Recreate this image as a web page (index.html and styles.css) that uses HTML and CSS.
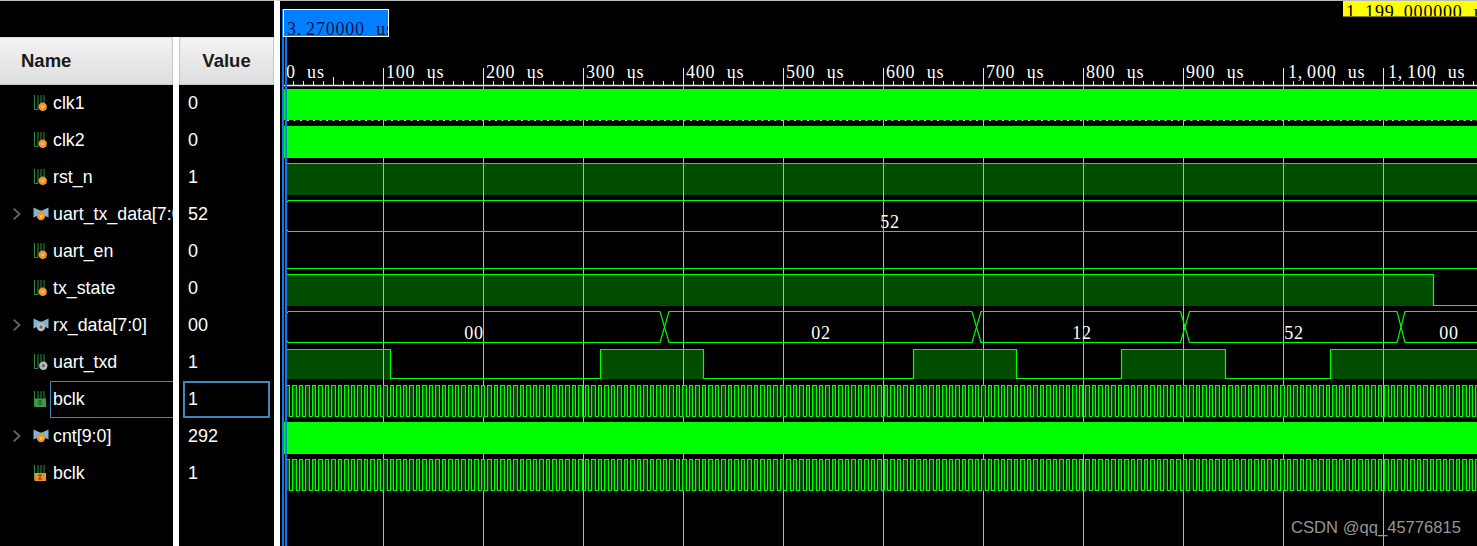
FILE: index.html
```html
<!DOCTYPE html>
<html lang="en">
<head>
    <meta charset="UTF-8">
    <meta name="viewport" content="width=device-width, initial-scale=1.0">
    <title>Waveform Viewer</title>
    <link rel="stylesheet" href="styles.css">
</head>
<body>

<svg class="icon-defs" width="0" height="0">
    <defs>
        <g id="wire">
            <path d="M1.5 0v14.500h3.500V0M8 0v8M11 0v8M11 14.500h2.500" fill="none" stroke="#2a8f42" stroke-width="1"/>
        </g>
        <g id="bowtie">
            <path d="M.5 1.500l6.500 3h2l6.500-3v10l-4.500-2h-6l-4.500 2z" fill="#80b4d2"/>
        </g>
        <g id="orange-dot">
            <circle r="4.200" fill="#f0942c"/>
            <path d="M-1.400-1.300l1.400 2.800 1.400-2.800" fill="none" stroke="#ffe9a8" stroke-width=".8"/>
        </g>
        <g id="gray-dot">
            <circle r="4.200" fill="#b9b9b9"/>
            <circle r="1.600" fill="#666"/>
        </g>
    </defs>
</svg>

<div class="viewer">
    <div class="panels">
        <div class="panels-top"></div>
        <div class="columns">
            <div class="col col-name">
                <div class="col-head">Name</div>
                <div class="row"><svg class="sig" viewBox="0 0 17 17"><use href="#wire"/><use href="#orange-dot" x="9.700" y="11.700"/></svg><span>clk1</span></div>
                <div class="row"><svg class="sig" viewBox="0 0 17 17"><use href="#wire"/><use href="#orange-dot" x="9.700" y="11.700"/></svg><span>clk2</span></div>
                <div class="row"><svg class="sig" viewBox="0 0 17 17"><use href="#wire"/><use href="#orange-dot" x="9.700" y="11.700"/></svg><span>rst_n</span></div>
                <div class="row"><svg class="chev" viewBox="0 0 8 12"><path d="M.7 .7l5.800 5.300-5.800 5.300"/></svg><svg class="sig" viewBox="0 0 17 17"><use href="#bowtie"/><use href="#orange-dot" x="8" y="10"/></svg><span>uart_tx_data[7:0]</span></div>
                <div class="row"><svg class="sig" viewBox="0 0 17 17"><use href="#wire"/><use href="#orange-dot" x="9.700" y="11.700"/></svg><span>uart_en</span></div>
                <div class="row"><svg class="sig" viewBox="0 0 17 17"><use href="#wire"/><use href="#orange-dot" x="9.700" y="11.700"/></svg><span>tx_state</span></div>
                <div class="row"><svg class="chev" viewBox="0 0 8 12"><path d="M.7 .7l5.800 5.300-5.800 5.300"/></svg><svg class="sig" viewBox="0 0 17 17"><use href="#bowtie"/><use href="#gray-dot" x="8" y="10"/></svg><span>rx_data[7:0]</span></div>
                <div class="row"><svg class="sig" viewBox="0 0 17 17"><use href="#wire"/><use href="#gray-dot" x="10.300" y="11.700"/></svg><span>uart_txd</span></div>
                <div class="row row-selected"><svg class="sig" viewBox="0 0 17 17"><use href="#wire"/><rect x="1.500" y="7.500" width="11.500" height="8.500" fill="#3f9a48"/><path d="M6 9.500h2v4h-2z" fill="none" stroke="#1c5a24"/></svg><span>bclk</span></div>
                <div class="row"><svg class="chev" viewBox="0 0 8 12"><path d="M.7 .7l5.800 5.300-5.800 5.300"/></svg><svg class="sig" viewBox="0 0 17 17"><use href="#bowtie"/><use href="#orange-dot" x="8" y="10"/></svg><span>cnt[9:0]</span></div>
                <div class="row"><svg class="sig" viewBox="0 0 17 17"><use href="#wire"/><rect x="1.500" y="8" width="11.500" height="8" fill="#f0902a"/><path d="M5 10h4M7 10v4M5 14h4" fill="none" stroke="#6b3a08"/></svg><span>bclk</span></div>
            </div>
            <div class="col col-value">
                <div class="col-head">Value</div>
                <div class="val">0</div>
                <div class="val">0</div>
                <div class="val">1</div>
                <div class="val">52</div>
                <div class="val">0</div>
                <div class="val">0</div>
                <div class="val">00</div>
                <div class="val">1</div>
                <div class="val val-selected">1</div>
                <div class="val">292</div>
                <div class="val">1</div>
            </div>
        </div>
    </div>

    <div class="wave-pane">
        <svg class="wave" viewBox="280 0 1197 546" width="1197" height="546">
            <defs>
                <!-- one 13px tile is two periods of the 6.5px clock -->
                <path id="clk-tile" d="M0 31V0h3v31h3V0h4v31h3"/>
                <g id="clk-130">
                    <use href="#clk-tile" x="0"/><use href="#clk-tile" x="13"/><use href="#clk-tile" x="26"/><use href="#clk-tile" x="39"/><use href="#clk-tile" x="52"/>
                    <use href="#clk-tile" x="65"/><use href="#clk-tile" x="78"/><use href="#clk-tile" x="91"/><use href="#clk-tile" x="104"/><use href="#clk-tile" x="117"/>
                </g>
                <g id="clk-wave">
                    <use href="#clk-130" x="0"/><use href="#clk-130" x="130"/><use href="#clk-130" x="260"/><use href="#clk-130" x="390"/><use href="#clk-130" x="520"/>
                    <use href="#clk-130" x="650"/><use href="#clk-130" x="780"/><use href="#clk-130" x="910"/><use href="#clk-130" x="1040"/><use href="#clk-130" x="1170"/>
                </g>
                <clipPath id="cursor-clip"><rect x="284" y="10" width="104" height="26"/></clipPath>
                <clipPath id="time-clip"><rect x="1343" y="1" width="134" height="15"/></clipPath>
            </defs>

            <!-- dark traces sit under the grid -->
            <g class="dark">
                <rect x="286" y="163" width="1191" height="32"/>
                <rect x="286" y="274" width="1147" height="32"/>
                <path d="M286 379V349H390V379H600V349H703V379H913V349H1016V379H1121V349H1225V379H1330V349H1477V379H286z"/>
            </g>

            <g class="grid">
                <path d="M383.500 85V546M483.500 85V546M583.500 85V546M683.500 85V546M783.500 85V546M883.500 85V546M983.500 85V546M1083.500 85V546M1183.500 85V546M1283.500 85V546M1383.500 85V546"/>
            </g>

            <use class="clk" href="#clk-wave" x="286.500" y="385.500"/>
            <use class="clk" href="#clk-wave" x="286.500" y="459.500"/>

            <g class="trace">
                <path d="M287 163.500H1477"/>
                <path d="M288 200.500H1477M288 231.500H1477M288 200.500L286.500 203V229L288 231.500"/>
                <path d="M287 268.500H1477"/>
                <path d="M287 274.500H1433.500V305.500H1477"/>
                <path d="M288 311.500L286.500 314V340L288 342.500"/>
                <path d="M288 311.500H660L669 342.500H972L981 311.500H1180.500L1189.500 342.500H1397L1405 311.500H1477"/>
                <path d="M288 342.500H660L669 311.500H972L981 342.500H1180.500L1189.500 311.500H1397L1405 342.500H1477"/>
                <path d="M287 349.500H390.500V378.500H600.500V349.500H703.500V378.500H913.500V349.500H1016.500V378.500H1121.500V349.500H1225.500V378.500H1330.500V349.500H1477"/>
            </g>
            <g class="bright">
                <rect x="287" y="89" width="1190" height="31"/>
                <rect x="287" y="126" width="1190" height="32"/>
                <rect x="287" y="422" width="1190" height="32"/>
                <rect x="284" y="89" width="1" height="31"/>
                <rect x="284" y="126" width="1" height="32"/>
                <rect x="284" y="422" width="1" height="32"/>
            </g>
            <path class="clk-dots" d="M287 120.500H1477"/>

            <g class="axis">
                <path class="axis-line" d="M284 85.500H1477"/>
                <path d="M293.500 85V81M303.500 85V81M313.500 85V81M323.500 85V81M343.500 85V81M353.500 85V81M363.500 85V81M373.500 85V81M393.500 85V81M403.500 85V81M413.500 85V81M423.500 85V81M443.500 85V81M453.500 85V81M463.500 85V81M473.500 85V81M493.500 85V81M503.500 85V81M513.500 85V81M523.500 85V81M543.500 85V81M553.500 85V81M563.500 85V81M573.500 85V81M593.500 85V81M603.500 85V81M613.500 85V81M623.500 85V81M643.500 85V81M653.500 85V81M663.500 85V81M673.500 85V81M693.500 85V81M703.500 85V81M713.500 85V81M723.500 85V81M743.500 85V81M753.500 85V81M763.500 85V81M773.500 85V81M793.500 85V81M803.500 85V81M813.500 85V81M823.500 85V81M843.500 85V81M853.500 85V81M863.500 85V81M873.500 85V81M893.500 85V81M903.500 85V81M913.500 85V81M923.500 85V81M943.500 85V81M953.500 85V81M963.500 85V81M973.500 85V81M993.500 85V81M1003.500 85V81M1013.500 85V81M1023.500 85V81M1043.500 85V81M1053.500 85V81M1063.500 85V81M1073.500 85V81M1093.500 85V81M1103.500 85V81M1113.500 85V81M1123.500 85V81M1143.500 85V81M1153.500 85V81M1163.500 85V81M1173.500 85V81M1193.500 85V81M1203.500 85V81M1213.500 85V81M1223.500 85V81M1243.500 85V81M1253.500 85V81M1263.500 85V81M1273.500 85V81M1293.500 85V81M1303.500 85V81M1313.500 85V81M1323.500 85V81M1343.500 85V81M1353.500 85V81M1363.500 85V81M1373.500 85V81M1393.500 85V81M1403.500 85V81M1413.500 85V81M1423.500 85V81M1443.500 85V81M1453.500 85V81M1463.500 85V81M1473.500 85V81"/>
                <path d="M333.500 85V77M433.500 85V77M533.500 85V77M633.500 85V77M733.500 85V77M833.500 85V77M933.500 85V77M1033.500 85V77M1133.500 85V77M1233.500 85V77M1333.500 85V77M1433.500 85V77"/>
                <path d="M383.500 85V68M483.500 85V68M583.500 85V68M683.500 85V68M783.500 85V68M883.500 85V68M983.500 85V68M1083.500 85V68M1183.500 85V68M1283.500 85V68M1383.500 85V68"/>
            </g>
            <g class="axis-labels">
                <text x="286" y="78">0 us</text>
                <text x="386" y="78">100 us</text>
                <text x="486" y="78">200 us</text>
                <text x="586" y="78">300 us</text>
                <text x="686" y="78">400 us</text>
                <text x="786" y="78">500 us</text>
                <text x="886" y="78">600 us</text>
                <text x="986" y="78">700 us</text>
                <text x="1086" y="78">800 us</text>
                <text x="1186" y="78">900 us</text>
                <text x="1288" y="78">1,<tspan dx="4">000 us</tspan></text>
                <text x="1388" y="78">1,<tspan dx="4">100 us</tspan></text>
            </g>

            <g class="bus-labels">
                <text x="890" y="228">52</text>
                <text x="474" y="339">00</text>
                <text x="821" y="339">02</text>
                <text x="1082" y="339">12</text>
                <text x="1294" y="339">52</text>
                <text x="1449" y="339">00</text>
            </g>

            <g class="cursor">
                <rect class="cursor-line" x="282" y="9" width="2" height="537"/>
                <rect class="cursor-line" x="285" y="36" width="2" height="510"/>
                <rect class="cursor-flag" x="283.500" y="9.500" width="105" height="27"/>
                <text class="cursor-time" x="287" y="35" clip-path="url(#cursor-clip)">3.<tspan dx="4">270000 us</tspan></text>
            </g>

            <g class="time-flag">
                <rect x="1343" y="1" width="134" height="15.500"/>
                <text x="1346" y="17.500" clip-path="url(#time-clip)">1,<tspan dx="4">199.</tspan><tspan dx="4">000000 us</tspan></text>
            </g>
        </svg>
    </div>
</div>

<div class="watermark">CSDN @qq_45776815</div>

</body>
</html>
```

FILE: styles.css
```css
html, body {
    margin: 0;
    padding: 0;
    background-color: #000;
    overflow: hidden;
}

.icon-defs {
    display: block;
    height: 0;
}

.viewer {
    display: flex;
    height: 546px;
    width: 1477px;
    font-family: "Liberation Sans", Arial, sans-serif;
    color: #fff;
}

.panels {
    width: 274px;
    display: flex;
    flex-direction: column;
    flex-shrink: 0;
}

.panels-top {
    height: 37px;
    flex-shrink: 0;
    border-top: 1px solid #bbb;
    box-sizing: border-box;
}

.columns {
    flex: 1;
    display: flex;
    gap: 6px;
    background: #fff;
}

.col {
    background: #000;
}

.col-name {
    width: 173px;
    overflow: hidden;
}

.col-value {
    width: 95px;
}

.col-head {
    height: 48px;
    box-sizing: border-box;
    background: linear-gradient(#f3f3f3, #dedede);
    border: 1px solid #c6c6c6;
    border-top-color: #ddd;
    color: #1a1a1a;
    font-size: 18.5px;
    font-weight: bold;
    display: flex;
    align-items: center;
    justify-content: center;
}

.col-name .col-head {
    justify-content: flex-start;
    padding-left: 21px;
    border-left: none;
}

.row {
    height: 37px;
    position: relative;
    display: flex;
    align-items: center;
    padding-left: 53px;
    font-size: 17.8px;
    white-space: nowrap;
    box-sizing: border-box;
}

.sig {
    position: absolute;
    left: 33px;
    top: 10px;
    width: 17px;
    height: 17px;
}

.chev {
    position: absolute;
    left: 13px;
    top: 12px;
    width: 8px;
    height: 12px;
    fill: none;
    stroke: #666;
    stroke-width: 1.8;
}

.row-selected {
    margin-left: 50px;
    padding-left: 2px;
    border: 1px solid #3f86bd;
    border-right: none;
}

.row-selected .sig {
    left: -18px;
    top: 9px;
}

.val {
    height: 37px;
    display: flex;
    align-items: center;
    padding-left: 9px;
    font-size: 18px;
}

.val-selected {
    margin-left: 4px;
    width: 87px;
    padding-left: 3px;
    box-sizing: border-box;
    border: 2px solid #3f86bd;
}

.wave-pane {
    flex: 1;
    border-left: 6px solid #fff;
    border-top: 1px solid #bbb;
    height: 545px;
    overflow: hidden;
}

.wave {
    display: block;
    margin-top: -1px;
}

.dark rect, .dark path {
    fill: #004d00;
}

.grid path {
    stroke: #b5b5b5;
    fill: none;
}

.clk {
    fill: #004d00;
    stroke: #00ff00;
    stroke-width: 1.2;
}

.trace path {
    stroke: #00ff00;
    stroke-width: 1.2;
    fill: none;
}

.bright rect {
    fill: #00ff00;
}

.clk-dots {
    stroke: #8f8;
    stroke-dasharray: 2 4.5;
    fill: none;
}

.axis path {
    stroke: #e8e8e8;
    fill: none;
}

.axis .axis-line {
    stroke-width: 1.5;
}

.axis-labels text, .bus-labels text, .cursor-time, .time-flag text {
    font-family: "Liberation Serif", serif;
    font-size: 18px;
    letter-spacing: .8px;
    word-spacing: 6px;
}

.axis-labels text, .bus-labels text {
    fill: #fff;
}

.bus-labels text {
    text-anchor: middle;
}

.cursor-line {
    fill: #0a78ee;
}

.cursor-flag {
    fill: #0080ff;
    stroke: #fff;
}

.cursor-time {
    fill: #00144d;
}

.time-flag rect {
    fill: #ffff00;
}

.time-flag text {
    fill: #000;
}

.watermark {
    position: absolute;
    left: 1291px;
    top: 518px;
    font-family: "Liberation Sans", Arial, sans-serif;
    font-size: 16.6px;
    color: #969696;
    white-space: nowrap;
}
```
